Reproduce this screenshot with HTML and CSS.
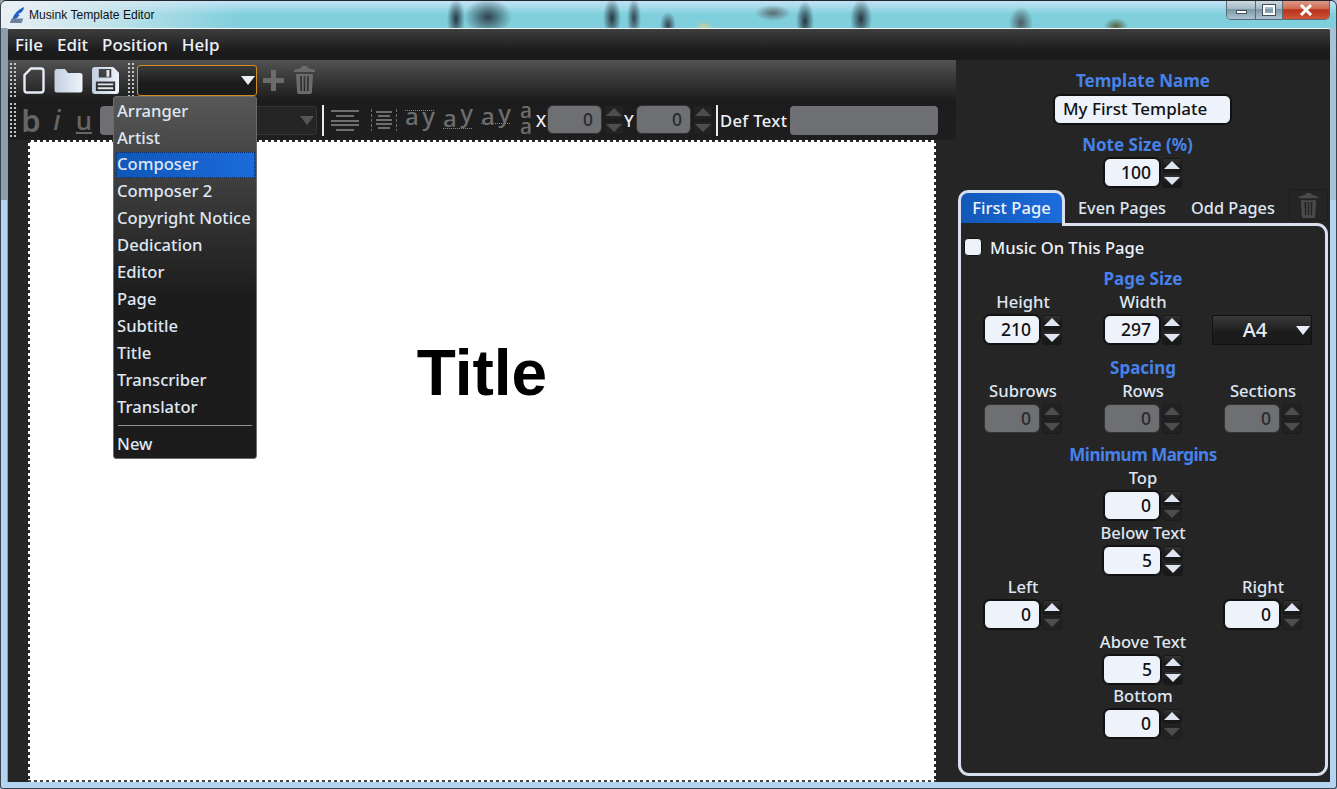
FILE: index.html
```html
<!DOCTYPE html>
<html lang="en">
<head>
    <meta charset="UTF-8">
    <title>Musink Template Editor</title>
    <link rel="stylesheet" href="styles.css">
</head>
<body>
    <div class="desktop"></div>
    <div class="titlebar">
        <svg class="app-icon" width="18" height="18" viewBox="0 0 20 20">
            <path d="M5 15 C6 9 11 4 18 1 C17 6 14 8 11 9 L13 10 C11 13 8 15 5 15Z" fill="#1f5fc4"/>
            <path d="M2 19 L4 14 L17 14 L15 19Z" fill="#6d8199"/>
        </svg>
        <span class="app-title">Musink Template Editor</span>
        <div class="win-controls">
            <div class="win-btn win-min"><span></span></div>
            <div class="win-btn win-max"><span></span></div>
            <div class="win-btn win-close">
                <svg width="16" height="12" viewBox="0 0 16 12"><path d="M3 1 L13 11 M13 1 L3 11" stroke="#fff" stroke-width="3"/></svg>
            </div>
        </div>
    </div>

    <div class="client">
        <div class="menubar">
            <span>File</span>
            <span>Edit</span>
            <span>Position</span>
            <span>Help</span>
        </div>

        <div class="workspace">
            <div class="editor">
                <div class="toolbars">
                    <div class="toolbar toolbar-top">
                        <div class="grip"></div>
                        <svg class="tool-new" width="22" height="27" viewBox="0 0 22 27">
                            <path d="M8 1.500 H18 Q20.500 1.500 20.500 4 V23 Q20.500 25.500 18 25.500 H4 Q1.500 25.500 1.500 23 V8Z" fill="none" stroke="#e6ecf6" stroke-width="2.400"/>
                        </svg>
                        <svg class="tool-open" width="29" height="25" viewBox="0 0 29 25">
                            <defs>
                                <linearGradient id="folderfill" x1="0" y1="0" x2="1" y2="0">
                                    <stop offset="0" stop-color="#c3cfe2"/>
                                    <stop offset="1" stop-color="#eef3fb"/>
                                </linearGradient>
                            </defs>
                            <path d="M3 1 H11 L14 5 H26 Q28.500 5 28.500 7.500 V22 Q28.500 24.500 26 24.500 H3 Q.5 24.500 .5 22 V3.500 Q.5 1 3 1Z" fill="url(#folderfill)"/>
                        </svg>
                        <svg class="tool-save" width="27" height="27" viewBox="0 0 28 28">
                            <path fill-rule="evenodd" d="M3 0 H22 L28 6 V25 Q28 28 25 28 H3 Q0 28 0 25 V3 Q0 0 3 0Z M7 2 V11 H20 V2Z M15 3 V10 H18 V3Z M4 15 V25 H24 V15Z" fill="url(#folderfill)"/>
                            <path d="M6 18 H22 M6 22 H22" stroke="#dfe6f2" stroke-width="2"/>
                        </svg>
                        <div class="grip grip-second"></div>
                        <div class="field-combo">
                            <span class="arrow-down"></span>
                        </div>
                        <svg class="tool-add" width="21" height="21" viewBox="0 0 21 21">
                            <path d="M8 0 H13 V8 H21 V13 H13 V21 H8 V13 H0 V8 H8Z" fill="#6b6b6b"/>
                        </svg>
                        <svg class="trash" width="21" height="28" viewBox="0 0 21 28">
                            <use href="#trash-shape"/>
                        </svg>
                    </div>

                    <div class="toolbar toolbar-format">
                        <div class="grip"></div>
                        <span class="fmt fmt-b">b</span>
                        <span class="fmt fmt-i">i</span>
                        <span class="fmt fmt-u">u</span>
                        <div class="font-combo">
                            <div class="font-name"></div>
                            <div class="font-size"><span class="arrow-down dim"></span></div>
                        </div>
                        <div class="sep"></div>
                        <svg class="align-one" width="28" height="22" viewBox="0 0 28 22">
                            <path d="M0 2 H28 M5 7 H23 M0 12 H28 M0 16 H28 M5 21 H23" stroke="#6e6e6e" stroke-width="2"/>
                        </svg>
                        <svg class="align-two" width="26" height="22" viewBox="0 0 26 22">
                            <path d="M5 3 H21 M7 7 H19 M5 11 H21 M5 15 H21 M7 19 H19" stroke="#6e6e6e" stroke-width="2"/>
                            <path d="M.5 0 V22 M25.500 0 V22" stroke="#6e6e6e" stroke-dasharray="3 2"/>
                        </svg>
                        <span class="ay ay-over"><span>a</span><span>y</span></span>
                        <span class="ay ay-under"><span>a</span><span>y</span></span>
                        <span class="ay ay-mid"><span>a</span><span>y</span></span>
                        <span class="ay-stack">a a</span>
                        <span class="tool-label label-x">X</span>
                        <div class="spinner off tool-spin">
                            <div class="spin-value">0</div>
                            <div class="spin-btns"><span class="up dim"></span><span class="down dim"></span></div>
                        </div>
                        <span class="tool-label label-y">Y</span>
                        <div class="spinner off tool-spin">
                            <div class="spin-value">0</div>
                            <div class="spin-btns"><span class="up dim"></span><span class="down dim"></span></div>
                        </div>
                        <div class="sep sep-right"></div>
                        <span class="tool-label label-def">Def Text</span>
                        <div class="def-text"></div>
                    </div>
                </div>

                <div class="canvas">
                    <div class="page"><span class="page-title">Title</span></div>
                </div>

                <ul class="field-menu">
                    <li>Arranger</li>
                    <li>Artist</li>
                    <li class="selected">Composer</li>
                    <li>Composer 2</li>
                    <li>Copyright Notice</li>
                    <li>Dedication</li>
                    <li>Editor</li>
                    <li>Page</li>
                    <li>Subtitle</li>
                    <li>Title</li>
                    <li>Transcriber</li>
                    <li>Translator</li>
                    <li class="rule"></li>
                    <li>New</li>
                </ul>
            </div>

            <aside class="props">
                <div class="heading">Template Name</div>
                <div class="name-input">My First Template</div>
                <div class="heading note-heading">Note Size (%)</div>
                <div class="spinner">
                    <div class="spin-value">100</div>
                    <div class="spin-btns"><span class="up"></span><span class="down"></span></div>
                </div>

                <div class="tabs">
                    <div class="tab active">First Page</div>
                    <div class="tab tab-even">Even Pages</div>
                    <div class="tab tab-odd">Odd Pages</div>
                    <div class="tab-delete">
                        <svg class="trash" width="19" height="25" viewBox="0 0 21 28"><use href="#trash-shape" opacity=".55"/></svg>
                    </div>
                </div>

                <div class="tab-panel">
                    <label class="check-row"><span class="check"></span>Music On This Page</label>

                    <div class="heading sub-heading">Page Size</div>
                    <div class="three-col">
                        <div class="cell">
                            <div class="label">Height</div>
                            <div class="spinner">
                                <div class="spin-value">210</div>
                                <div class="spin-btns"><span class="up"></span><span class="down"></span></div>
                            </div>
                        </div>
                        <div class="cell">
                            <div class="label">Width</div>
                            <div class="spinner">
                                <div class="spin-value">297</div>
                                <div class="spin-btns"><span class="up"></span><span class="down"></span></div>
                            </div>
                        </div>
                        <div class="cell">
                            <div class="label">&nbsp;</div>
                            <div class="paper-combo">A4<span class="arrow-down"></span></div>
                        </div>
                    </div>

                    <div class="heading sub-heading spacing-heading">Spacing</div>
                    <div class="three-col">
                        <div class="cell">
                            <div class="label">Subrows</div>
                            <div class="spinner off">
                                <div class="spin-value">0</div>
                                <div class="spin-btns"><span class="up dim"></span><span class="down dim"></span></div>
                            </div>
                        </div>
                        <div class="cell">
                            <div class="label">Rows</div>
                            <div class="spinner off">
                                <div class="spin-value">0</div>
                                <div class="spin-btns"><span class="up dim"></span><span class="down dim"></span></div>
                            </div>
                        </div>
                        <div class="cell">
                            <div class="label">Sections</div>
                            <div class="spinner off">
                                <div class="spin-value">0</div>
                                <div class="spin-btns"><span class="up dim"></span><span class="down dim"></span></div>
                            </div>
                        </div>
                    </div>

                    <div class="heading sub-heading margins-heading">Minimum Margins</div>
                    <div class="cell">
                        <div class="label">Top</div>
                        <div class="spinner">
                            <div class="spin-value">0</div>
                            <div class="spin-btns"><span class="up"></span><span class="down dim"></span></div>
                        </div>
                    </div>
                    <div class="cell">
                        <div class="label">Below Text</div>
                        <div class="spinner wide">
                            <div class="spin-value">5</div>
                            <div class="spin-btns"><span class="up"></span><span class="down"></span></div>
                        </div>
                    </div>
                    <div class="three-col side-margins">
                        <div class="cell">
                            <div class="label">Left</div>
                            <div class="spinner">
                                <div class="spin-value">0</div>
                                <div class="spin-btns"><span class="up"></span><span class="down dim"></span></div>
                            </div>
                        </div>
                        <div class="cell"></div>
                        <div class="cell">
                            <div class="label">Right</div>
                            <div class="spinner">
                                <div class="spin-value">0</div>
                                <div class="spin-btns"><span class="up"></span><span class="down dim"></span></div>
                            </div>
                        </div>
                    </div>
                    <div class="cell">
                        <div class="label">Above Text</div>
                        <div class="spinner wide">
                            <div class="spin-value">5</div>
                            <div class="spin-btns"><span class="up"></span><span class="down"></span></div>
                        </div>
                    </div>
                    <div class="cell bottom-margin">
                        <div class="label">Bottom</div>
                        <div class="spinner">
                            <div class="spin-value">0</div>
                            <div class="spin-btns"><span class="up"></span><span class="down dim"></span></div>
                        </div>
                    </div>
                </div>
            </aside>
        </div>
    </div>

    <svg class="defs" width="0" height="0">
        <defs>
            <g id="trash-shape" fill="#6b6b6b">
                <path d="M7 2 L8 0 H13 L14 2 L21 4 V6 H0 V4Z"/>
                <path fill-rule="evenodd" d="M2 8 H19 L18 26 Q18 28 16 28 H5 Q3 28 3 26Z M6 10 L6.500 25 H8 L8 10Z M9.700 10 V25 H11.300 V10Z M13 10 L13 25 H14.500 L15 10Z"/>
            </g>
        </defs>
    </svg>
</body>
</html>
```

FILE: styles.css
```css
* {
    box-sizing: border-box;
}
html, body {
    margin: 0;
    height: 100%;
}
body {
    position: relative;
    width: 1337px;
    height: 789px;
    overflow: hidden;
    font-family: 'Noto Sans', Arial, sans-serif;
    font-size: 16.600px;
    font-weight: 500;
    color: #e6ecf6;
    background:
        linear-gradient(90deg, #8c9eac 0, #8c9eac 7px, transparent 7px, transparent 1330px, #a9c3d6 1330px) 0 0 / 100% 200px no-repeat,
        #b3d3f0;
    display: flex;
    flex-direction: column;
    padding: 0 7px 7px;
}
body::after {
    content: "";
    position: absolute;
    inset: 0;
    border: 1px solid #39454f;
    border-top-color: #20262b;
    border-radius: 6px 6px 3px 3px;
    pointer-events: none;
}
.desktop {
    position: absolute;
    left: 1px;
    top: 1px;
    width: 1335px;
    height: 27px;
    background:
        radial-gradient(ellipse 9px 20px at 455px 18px, #26363f, transparent),
        radial-gradient(ellipse 24px 18px at 487px 16px, #2f424c, transparent),
        radial-gradient(ellipse 9px 20px at 611px 17px, #26363f, transparent),
        radial-gradient(ellipse 7px 20px at 633px 17px, #33454f, transparent),
        radial-gradient(ellipse 8px 13px at 667px 24px, #33454f, transparent),
        radial-gradient(ellipse 9px 7px at 703px 27px, #d8cc90, transparent),
        radial-gradient(ellipse 18px 8px at 772px 12px, #5b6b72, transparent),
        radial-gradient(ellipse 9px 20px at 804px 20px, #26363f, transparent),
        radial-gradient(ellipse 11px 20px at 860px 18px, #26363f, transparent),
        radial-gradient(ellipse 12px 16px at 1020px 22px, #4a5c60, transparent),
        radial-gradient(ellipse 12px 8px at 1115px 25px, #5a6040, transparent),
        linear-gradient(180deg, #c4e3f6 0, #7fcfdc 50%, #80cedc 100%),
        #8fd0de;
}
.desktop::before {
    content: "";
    position: absolute;
    left: 0;
    top: 0;
    width: 240px;
    height: 27px;
    background: linear-gradient(90deg, #eaf0f4 0, rgba(220, 235, 240, .7) 45%, transparent 100%);
}

/* window title */
.titlebar {
    position: relative;
    height: 28px;
    flex: none;
    display: flex;
    align-items: center;
}
.app-icon {
    margin-left: 1px;
    margin-top: 2px;
}
.app-title {
    margin-left: 3px;
    margin-top: 2px;
    font-family: 'Liberation Sans', Arial, sans-serif;
    font-size: 12.100px;
    font-weight: 400;
    color: #111;
}
.win-controls {
    position: absolute;
    right: 0;
    top: 0;
    display: flex;
    height: 20px;
    border: 1px solid #5a6b78;
    border-top: 0;
    border-radius: 0 0 5px 5px;
    overflow: hidden;
}
.win-btn {
    height: 19px;
    display: flex;
    align-items: center;
    justify-content: center;
    border-left: 1px solid #5a6b78;
    background: linear-gradient(180deg, #cfdde6 0, #a6bac6 45%, #7f98a6 50%, #a9c4ce 100%);
}
.win-min {
    width: 28px;
    border-left: 0;
}
.win-min span {
    width: 11px;
    height: 4px;
    margin-top: 5px;
    background: #fff;
    border: 1px solid #44525c;
}
.win-max {
    width: 27px;
}
.win-max span {
    width: 12px;
    height: 10px;
    background: transparent;
    border: 2px solid #fff;
    outline: 1px solid #44525c;
}
.win-close {
    width: 47px;
    background: linear-gradient(180deg, #e0a193 0, #cf6a52 45%, #b8321a 52%, #d0543a 100%);
}

/* main client area */
.client {
    flex: 1;
    display: flex;
    flex-direction: column;
    background: #252525;
    border-top: 1px solid #f2f7fa;
    border-left: 1px solid #8a9aa8;
    border-radius: 3px 3px 0 0;
    overflow: hidden;
}
.menubar {
    height: 31px;
    flex: none;
    display: flex;
    align-items: center;
    gap: 14px;
    padding-left: 7px;
    font-size: 17px;
    background: linear-gradient(180deg, #3e3e3e 0, #1b1b1b 70%);
    color: #eef2fa;
}
.workspace {
    flex: 1;
    display: flex;
    min-height: 0;
}
.editor {
    position: relative;
    width: 948px;
    flex: none;
    display: flex;
    flex-direction: column;
}
.toolbars {
    height: 80px;
    flex: none;
    background: linear-gradient(180deg, #525252 0, #1c1c1c 50%, #1e1e1e 100%);
}
.toolbar {
    display: flex;
    align-items: center;
    height: 40px;
}
.grip {
    width: 6px;
    height: 34px;
    margin-left: 2px;
    background-image: radial-gradient(circle at 1px 1px, #c4c4c4 1.100px, transparent 1.300px);
    background-size: 4px 4px;
    flex: none;
}
.grip-second {
    margin-left: 9px;
}

/* top toolbar */
.tool-new {
    margin-left: 7px;
}
.tool-open {
    margin-left: 9px;
}
.tool-save {
    margin-left: 9px;
}
.field-combo {
    position: relative;
    width: 120px;
    height: 31px;
    margin-left: 3px;
    border: 1px solid #d98a20;
    border-radius: 3px;
    background: linear-gradient(180deg, #3a3a3a 0, #1b1b1b 60%);
}
.field-combo .arrow-down {
    position: absolute;
    right: 1px;
    top: 10px;
}
.tool-add {
    margin-left: 6px;
}
.trash {
    display: block;
}
.toolbar-top .trash {
    margin-left: 10px;
}
.arrow-down {
    display: block;
    width: 0;
    height: 0;
    border-left: 7.500px solid transparent;
    border-right: 7.500px solid transparent;
    border-top: 9px solid #e8edf6;
}
.arrow-down.dim {
    border-top-color: #555;
}

/* format toolbar */
.fmt {
    color: #666;
    text-align: center;
    flex: none;
}
.fmt-b {
    width: 22px;
    margin-left: 4px;
    font-size: 31px;
    font-weight: 600;
    line-height: 36px;
}
.fmt-i {
    width: 12px;
    margin-left: 9px;
    font-size: 27px;
    line-height: 36px;
    font-style: italic;
}
.fmt-u {
    width: 18px;
    margin-left: 12px;
    font-size: 26px;
    line-height: 36px;
    text-decoration: underline;
}
.font-combo {
    width: 217px;
    height: 29px;
    margin-left: 7px;
    display: flex;
}
.font-name {
    width: 60px;
    background: #6e6f73;
    border-radius: 4px;
}
.font-size {
    flex: 1;
    display: flex;
    justify-content: flex-end;
    align-items: center;
    padding-right: 2px;
    background: #252525;
    border: 1px solid #343434;
    border-radius: 3px;
}
.sep {
    width: 2px;
    height: 31px;
    margin-left: 5px;
    background: #e6ecf6;
    flex: none;
}
.align-one {
    margin-left: 7px;
}
.align-two {
    margin-left: 12px;
}
.ay {
    width: 30px;
    height: 26px;
    margin-left: 8px;
    align-self: flex-start;
    margin-top: 4px;
    display: flex;
    justify-content: space-between;
    color: #6e6e6e;
    font-size: 24px;
    line-height: 24px;
    flex: none;
}
.ay-over {
    background: repeating-linear-gradient(90deg, #888 0 1px, transparent 1px 2px) 0 6px / 100% 1px no-repeat;
}
.ay-under {
    background: repeating-linear-gradient(90deg, #888 0 1px, transparent 1px 2px) 0 24px / 100% 1px no-repeat;
}
.ay-mid {
    background: repeating-linear-gradient(90deg, #888 0 1px, transparent 1px 2px) 0 19px / 100% 1px no-repeat;
}
.ay-under span:first-child {
    margin-top: 2px;
}
.ay-under span:last-child, .ay-mid span:last-child {
    margin-top: -3px;
}
.ay-stack {
    width: 12px;
    margin-left: 9px;
    margin-top: -5px;
    color: #6e6e6e;
    font-size: 21px;
    line-height: 16px;
    text-align: center;
    flex: none;
}
.tool-label {
    color: #eef2fa;
    flex: none;
}
.label-x {
    width: 10px;
    margin-left: 4px;
    margin-right: 1px;
}
.label-y {
    width: 12px;
}
.label-def {
    width: 70px;
    letter-spacing: .35px;
    white-space: nowrap;
}
.tool-spin .spin-value {
    width: 55px;
}
.sep-right {
    margin-left: 3px;
    margin-right: 2px;
}
.def-text {
    width: 148px;
    height: 29px;
    background: #6e6f73;
    border-radius: 4px;
}

/* canvas */
.canvas {
    flex: 1;
    min-height: 0;
    padding: 0 20px 0 20px;
    background: #252525;
}
.page {
    height: 100%;
    background:
        repeating-linear-gradient(90deg, #2a2a2a 0 3px, transparent 3px 6px) 0 0 / 100% 2px no-repeat,
        repeating-linear-gradient(90deg, #444 0 3px, transparent 3px 6px) 0 100% / 100% 2px no-repeat,
        repeating-linear-gradient(180deg, #2a2a2a 0 3px, transparent 3px 6px) 0 0 / 2px 100% no-repeat,
        repeating-linear-gradient(180deg, #2a2a2a 0 3px, transparent 3px 6px) 100% 0 / 2px 100% no-repeat,
        #fff;
    position: relative;
    display: flex;
    justify-content: center;
    padding-top: 196px;
}
.page-title {
    font-family: 'Liberation Sans', Arial, sans-serif;
    font-weight: 700;
    font-size: 64px;
    line-height: 74px;
    color: #000;
    height: 74px;
}

/* dropdown list for the combo */
.field-menu {
    position: absolute;
    left: 105px;
    top: 36px;
    width: 144px;
    margin: 0;
    padding: 1px 2px 1px 3px;
    list-style: none;
    background: linear-gradient(180deg, #575757 0, #1c1c1c 55%);
    border: 1px solid #6b6b6b;
    border-radius: 3px;
    color: #dfe6f2;
}
.field-menu li {
    height: 27px;
    line-height: 26px;
    white-space: nowrap;
}
.field-menu .selected {
    height: 26px;
    line-height: 24px;
    margin-left: -1px;
    margin-right: -1px;
    padding-left: 1px;
    background: linear-gradient(90deg, #0f57b8, #1b6bdc);
    outline: 1px dotted #0a2a66;
    outline-offset: -1px;
}
.field-menu .rule {
    height: 1px;
    margin: 4px 2px 5px 1px;
    background: #8f8f8f;
}
.field-menu .rule + li {
    height: 26px;
}

/* properties panel */
.props {
    flex: 1;
    display: flex;
    flex-direction: column;
    align-items: center;
    background: #252525;
    padding: 9px 2px 0 2px;
}
.heading {
    color: #4682ea;
    font-size: 17px;
    font-weight: 700;
    line-height: 24px;
    text-align: center;
    white-space: nowrap;
}
.name-input {
    width: 177px;
    height: 29px;
    margin-top: 2px;
    margin-right: 1px;
    padding-left: 8px;
    background: #edf2fb;
    border: 1px solid #111;
    border-radius: 6px;
    color: #111;
    font-size: 17px;
    line-height: 26px;
    box-shadow: 0 0 0 1px #111;
    white-space: nowrap;
}
.note-heading {
    margin-top: 9px;
    margin-bottom: 1px;
    margin-right: 11px;
}
.tabs {
    width: 100%;
    height: 33px;
    margin-top: 2px;
    display: flex;
    align-items: flex-start;
    position: relative;
    font-size: 16.300px;
}
.tab {
    line-height: 36px;
    color: #dfe6f2;
    text-align: center;
    white-space: nowrap;
}
.tab.active {
    width: 107px;
    height: 36px;
    line-height: 30px;
    font-size: 16.600px;
    background: linear-gradient(90deg, #1258b8, #1b6cdd) 0 0 / 100% 30px no-repeat, #252525;
    border: 3px solid #d8e0ee;
    border-bottom: 0;
    border-radius: 10px 10px 0 0;
    color: #eef2fa;
    position: relative;
    z-index: 1;
}
.tab-even {
    margin-left: 13px;
}
.tab-odd {
    margin-left: 25px;
}
.tab-delete {
    position: absolute;
    right: 0;
    top: -1px;
    width: 39px;
    height: 32px;
    border: 1px solid #1d1d1d;
    border-radius: 3px;
    display: flex;
    align-items: center;
    justify-content: center;
}
.tab-panel {
    width: 100%;
    height: 553px;
    display: flex;
    flex-direction: column;
    align-items: center;
    padding-top: 9px;
    border: 3px solid #d8e0ee;
    border-radius: 0 11px 11px 11px;
}
.check-row {
    align-self: flex-start;
    display: flex;
    align-items: center;
    height: 24px;
    margin-bottom: 9px;
    color: #eef2fa;
    margin-left: 3px;
}
.check {
    width: 18px;
    height: 18px;
    margin-right: 8px;
    background: #edf2fb;
    border: 1px solid #111;
    border-radius: 4px;
}
.sub-heading {
    line-height: 22px;
}
.three-col {
    display: grid;
    grid-template-columns: 120px 120px 120px;
    justify-content: center;
}
.cell {
    display: flex;
    flex-direction: column;
    align-items: center;
}
.label {
    height: 25px;
    line-height: 23px;
    color: #dfe6f2;
    white-space: nowrap;
}
.spacing-heading {
    margin-top: 12px;
}
.margins-heading {
    margin-top: 10px;
    letter-spacing: -.5px;
}
.side-margins {
    margin-top: -1px;
}
.bottom-margin {
    margin-top: -1px;
}
.paper-combo {
    position: relative;
    width: 100px;
    height: 30px;
    margin-right: 2px;
    padding-right: 14px;
    text-align: center;
    line-height: 28px;
    font-size: 20px;
    border: 1px solid #111;
    border-radius: 2px;
    background: linear-gradient(180deg, #3a3a3a 0, #1b1b1b 60%);
}
.paper-combo .arrow-down {
    position: absolute;
    right: 1px;
    top: 10px;
}

/* spin boxes */
.spinner {
    display: flex;
    height: 30px;
    gap: 1px;
    flex: none;
}
.spin-value {
    width: 56px;
    height: 29px;
    padding-right: 8px;
    text-align: right;
    line-height: 27px;
    font-size: 17.500px;
    color: #111;
    background: #edf2fb;
    border: 1px solid #111;
    border-radius: 6px;
    box-shadow: 0 0 0 1px #111;
    margin-right: 1px;
}
.wide .spin-value {
    width: 58px;
}
.off .spin-value {
    background: #6e6f73;
    color: #2a2a2a;
    border-color: #333;
    box-shadow: none;
}
.spin-btns {
    width: 20px;
    display: flex;
    flex-direction: column;
    gap: 1px;
}
.spin-btns span {
    height: 15px;
    background: linear-gradient(180deg, #333 0, #191919 60%);
    border: 1px solid #181818;
    border-radius: 3px;
    position: relative;
}
.spin-btns span::after {
    content: "";
    position: absolute;
    left: 1px;
    width: 0;
    height: 0;
    border-left: 8px solid transparent;
    border-right: 8px solid transparent;
}
.spin-btns .up::after {
    top: 2px;
    border-bottom: 8px solid #dfe6f2;
}
.spin-btns .down::after {
    top: 2px;
    border-top: 8px solid #dfe6f2;
}
.spin-btns .up.dim::after {
    border-bottom-color: #4d4d4d;
}
.spin-btns .down.dim::after {
    border-top-color: #4d4d4d;
}
.spin-btns .dim {
    background: #222;
    border-color: #1c1c1c;
}
.defs {
    position: absolute;
}
```
